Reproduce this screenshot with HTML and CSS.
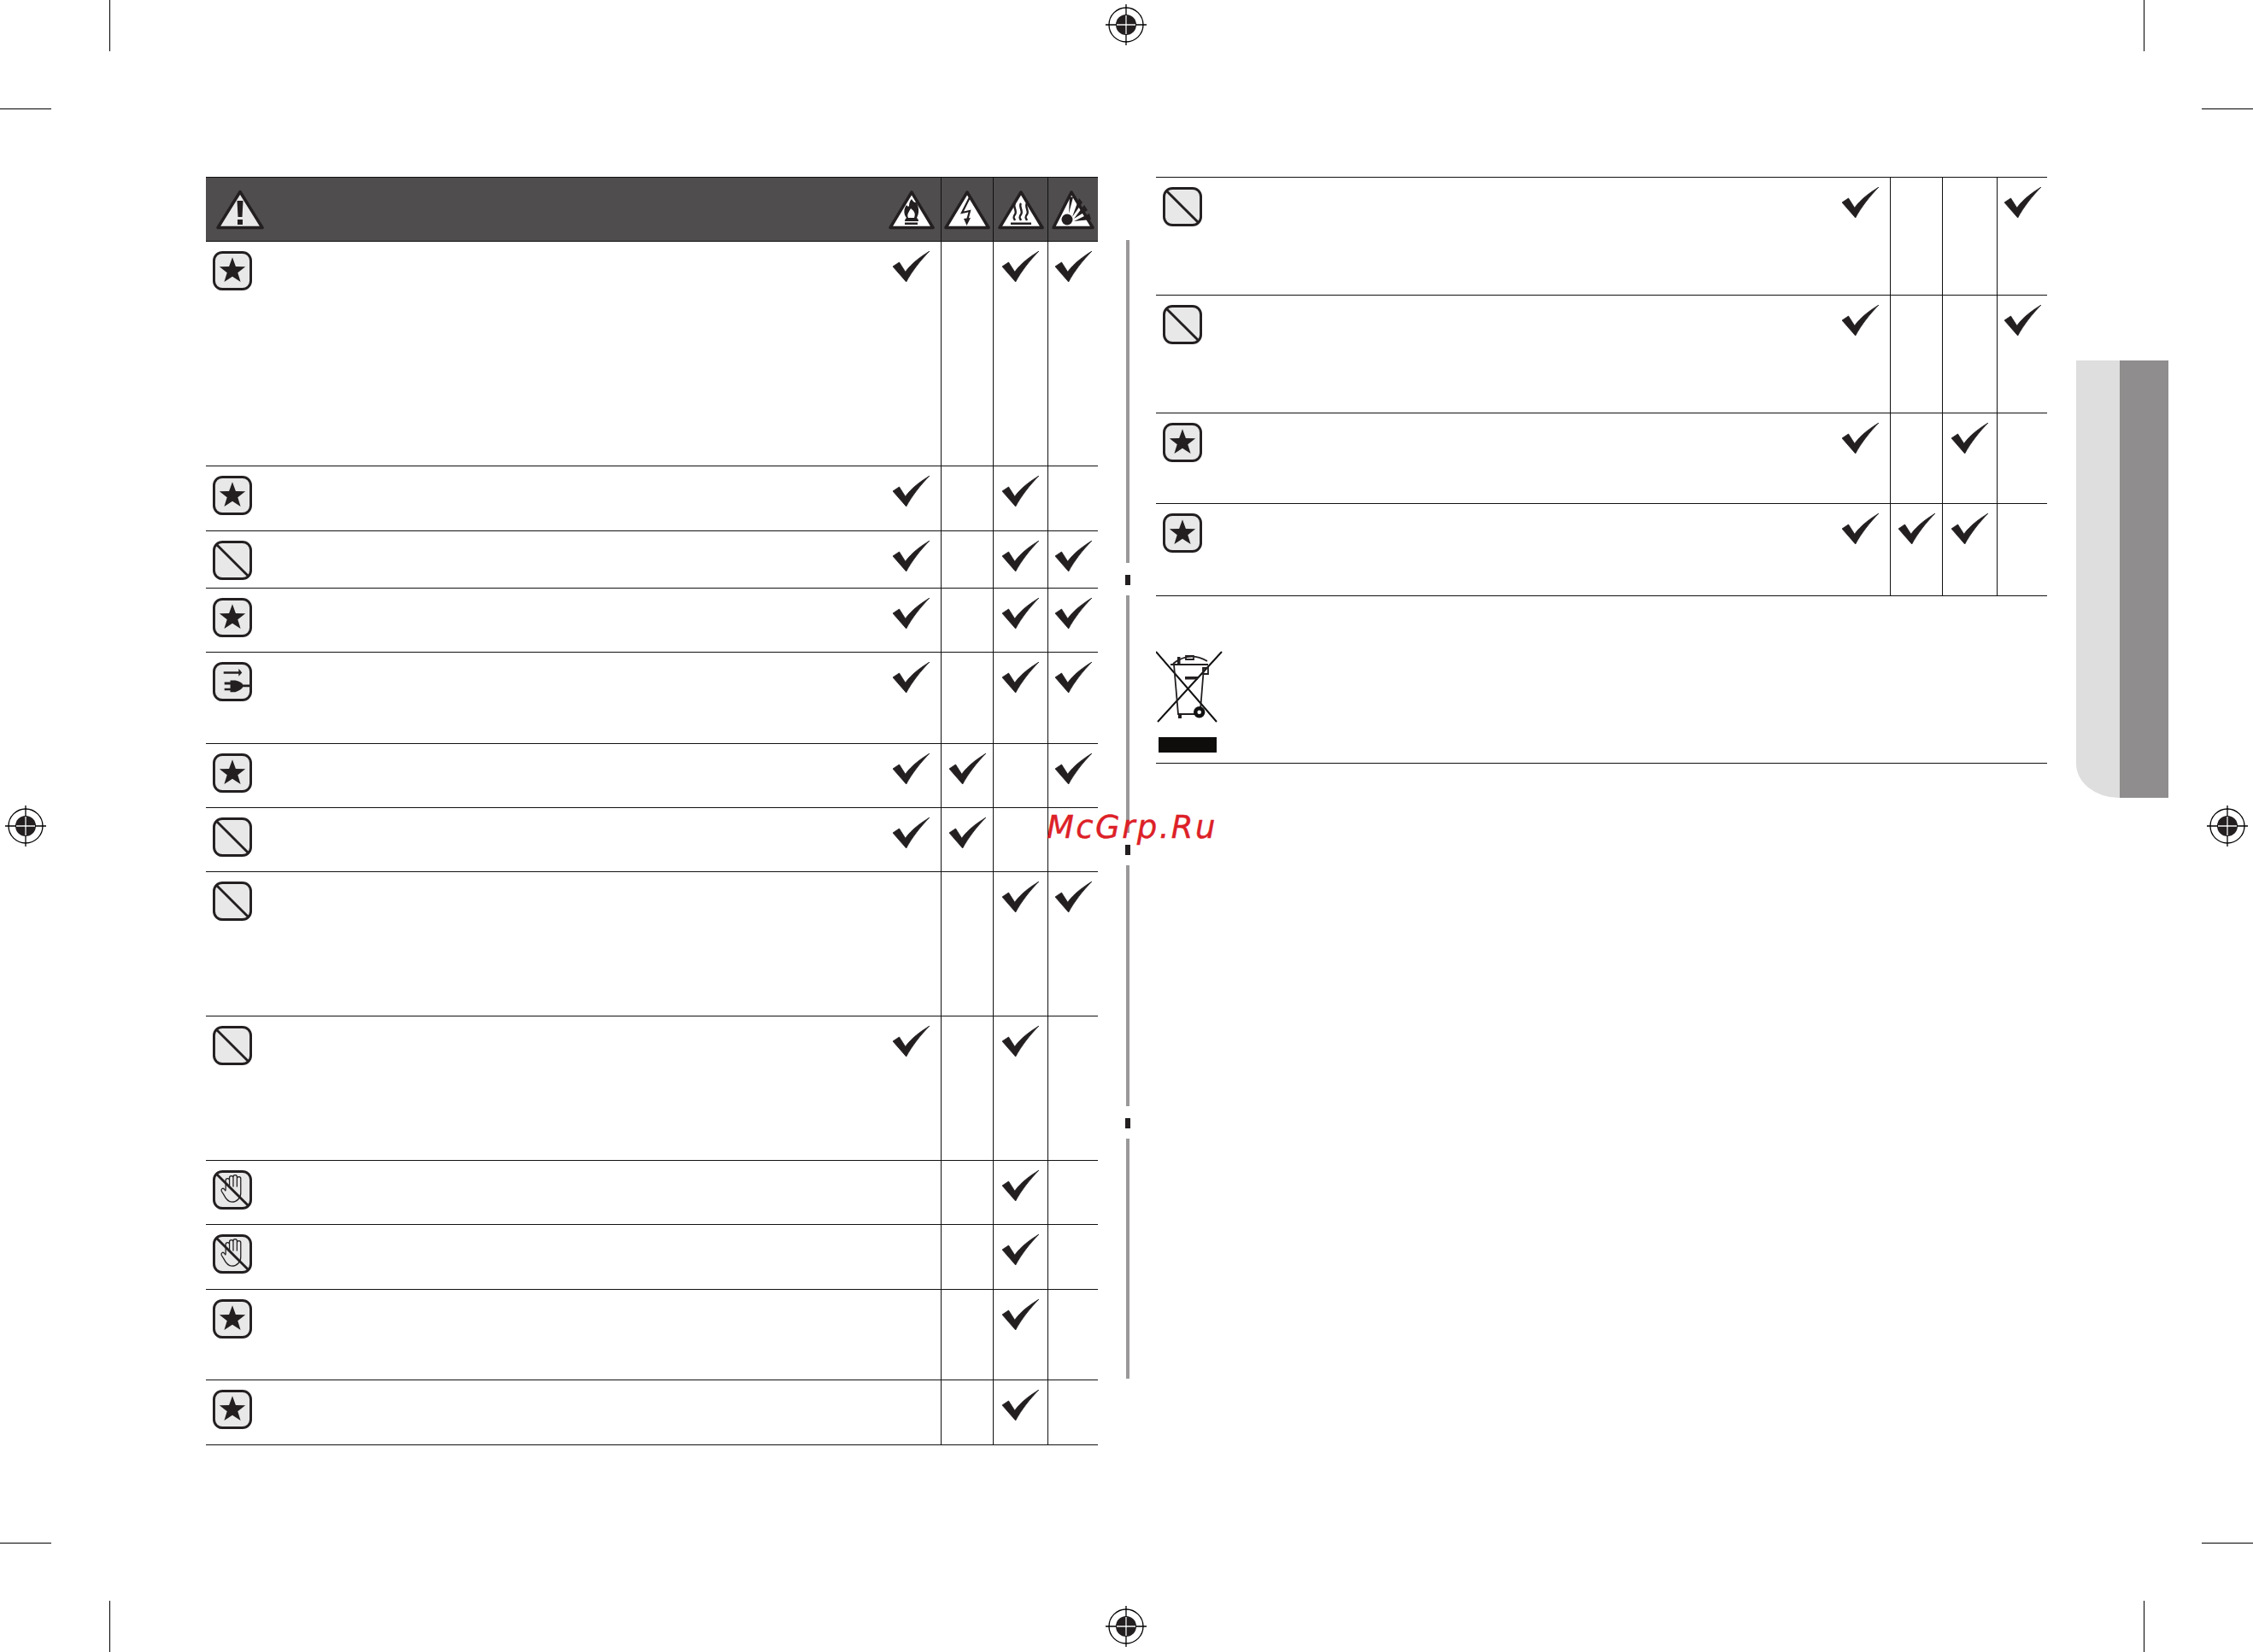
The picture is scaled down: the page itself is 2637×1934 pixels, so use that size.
FILE: index.html
```html
<!DOCTYPE html>
<html lang="en">
<head>
<meta charset="utf-8">
<title>Safety symbols</title>
<link rel="stylesheet" href="styles.css">
</head>
<body>
<svg class="defs" width="0" height="0" aria-hidden="true">
  <symbol id="check" viewBox="0 0 43 36"><path class="chk-path" d="M0 18 L7.5 13 L14.7 24.3 C22 14 32 7 43 0 C33 10 22 24 15.7 36 Z"/></symbol>
  <symbol id="star" viewBox="0 0 47 47"><rect x="1.500" y="1.500" width="44" height="44" rx="10" class="box"/><path d="M23.500 7.500 27.500 18.500 39 18.700 29.900 25.700 33.300 36.900 23.500 30.300 13.700 36.900 17.100 25.700 8 18.700 19.500 18.500Z"/></symbol>
  <symbol id="no" viewBox="0 0 47 47"><rect x="1.500" y="1.500" width="44" height="44" rx="10" class="box"/><path d="M4 4 43 43" class="ln"/></symbol>
  <symbol id="hand" viewBox="0 0 47 47"><rect x="1.500" y="1.500" width="44" height="44" rx="10" class="box"/><path class="hand-line" d="M15.500 24V12a2.250 2.250 0 0 1 4.500 0V21M20 21V9a2.250 2.250 0 0 1 4.500 0V20M24.500 20V8a2.250 2.250 0 0 1 4.500 0V20M29 20V10a2.250 2.250 0 0 1 4.500 0V27C33.500 33 29 38 23 38C18 38 15 33 13 29L10.500 25C9.500 22 12.500 20.500 14 23L15.500 25"/><path d="M4 4 43 43" class="ln"/></symbol>
  <symbol id="plug" viewBox="0 0 47 47"><rect x="1.500" y="1.500" width="44" height="44" rx="10" class="box"/><path d="M13 11.500H31V8L35 12.700 31 17V14H13Z"/><path d="M14 24H21V22H27Q35 24 36 27H44V30H36Q35 33 27 36H21V34H14V31.500H21V27H14Z"/></symbol>
  <symbol id="warn" viewBox="0 0 56 47"><path class="tri-grey" d="M28 2.500 54 44.500H2Z"/><path d="M24.500 13H31.500L30.500 32H25.500ZM25 35H31V41H25Z"/></symbol>
  <symbol id="fire" viewBox="0 0 54 47"><path class="tri" d="M27 3 52 44.500H2Z"/><path d="M27 11C29 15 32 16 32 14 36 20 36 28 33 33 35 35 35 36 35 37H19C19 36 19 35 21 33 17 28 18 22 21 18 22 20 24 20 24 19 24 16 25 13 27 11Z"/><path class="cut" d="M26 22C30 25 32 28 30 33H23C21 29 24 26 26 22Z"/><path d="M19 38.500H34V41H19Z"/></symbol>
  <symbol id="bolt" viewBox="0 0 54 47"><path class="tri" d="M27 3 52 44.500H2Z"/><path class="bolt-line" d="M30 9 21 27 30 25 27 36"/><path d="M23 34 31 33 26.500 42Z"/></symbol>
  <symbol id="hot" viewBox="0 0 54 47"><path class="tri" d="M27 3 52 44.500H2Z"/><path class="wave" d="M20 16C17 20 23 25 20 29S19 33 20 36M27 16C24 20 30 25 27 29S26 33 27 36M34 16C31 20 37 25 34 29S33 33 34 36"/><path d="M15 38.500H39V41H15Z"/></symbol>
  <symbol id="blast" viewBox="0 0 50 47"><path class="tri" d="M23 3 48 44.500H2Z"/><circle cx="18" cy="35" r="6.500"/><path d="M24 32 36 15 32 10ZM26 34 42 24 38 18ZM26 37 46 35 44 28ZM20 28 25 9 21 8Z"/></symbol>
  <symbol id="reg" viewBox="0 0 48 48"><circle cx="24" cy="24" r="20" class="ring"/><circle cx="24" cy="24" r="12"/><path class="cross" d="M0 24H48M24 0V48"/><path class="cross-in" d="M13 24H35M24 13V35"/></symbol>
  <symbol id="bin" viewBox="0 0 78 84"><path class="cross2" d="M0 1 71 83M77 1 2 83"/><path class="thin" d="M21 16 26 74H45M56 19 52 69M17 16H61M20 15Q39 0 60 12M35 6H44V10H35ZM55 20H61V27H55Z"/><path d="M25 7H28.500V16H25ZM34 30H49V33.500H34ZM26 74H30V79H26Z"/><circle cx="50.700" cy="71.700" r="4.500" class="wheel"/></symbol>
</svg>

<div class="mark reg reg-top"><svg><use href="#reg"/></svg></div>
<div class="mark reg reg-bottom"><svg><use href="#reg"/></svg></div>
<div class="mark reg reg-left"><svg><use href="#reg"/></svg></div>
<div class="mark reg reg-right"><svg><use href="#reg"/></svg></div>
<div class="mark v tl-v"></div><div class="mark h tl-h"></div>
<div class="mark v tr-v"></div><div class="mark h tr-h"></div>
<div class="mark v bl-v"></div><div class="mark h bl-h"></div>
<div class="mark v br-v"></div><div class="mark h br-h"></div>

<main class="page">
  <section class="sheet">
    <div class="row head">
      <div class="sym"><svg class="warn"><use href="#warn"/></svg></div>
      <div class="cell col-a"><svg class="hz"><use href="#fire"/></svg></div>
      <div class="cell"><svg class="hz"><use href="#bolt"/></svg></div>
      <div class="cell"><svg class="hz"><use href="#hot"/></svg></div>
      <div class="cell"><svg class="hz hz-b"><use href="#blast"/></svg></div>
    </div>
    <div class="row h-263"><div class="sym"><svg class="ico"><use href="#star"/></svg></div><div class="cell col-a"><svg class="chk"><use href="#check"/></svg></div><div class="cell"></div><div class="cell"><svg class="chk"><use href="#check"/></svg></div><div class="cell"><svg class="chk"><use href="#check"/></svg></div></div>
    <div class="row h-76"><div class="sym"><svg class="ico"><use href="#star"/></svg></div><div class="cell col-a"><svg class="chk"><use href="#check"/></svg></div><div class="cell"></div><div class="cell"><svg class="chk"><use href="#check"/></svg></div><div class="cell"></div></div>
    <div class="row h-67"><div class="sym"><svg class="ico"><use href="#no"/></svg></div><div class="cell col-a"><svg class="chk"><use href="#check"/></svg></div><div class="cell"></div><div class="cell"><svg class="chk"><use href="#check"/></svg></div><div class="cell"><svg class="chk"><use href="#check"/></svg></div></div>
    <div class="row h-75"><div class="sym"><svg class="ico"><use href="#star"/></svg></div><div class="cell col-a"><svg class="chk"><use href="#check"/></svg></div><div class="cell"></div><div class="cell"><svg class="chk"><use href="#check"/></svg></div><div class="cell"><svg class="chk"><use href="#check"/></svg></div></div>
    <div class="row h-107"><div class="sym"><svg class="ico"><use href="#plug"/></svg></div><div class="cell col-a"><svg class="chk"><use href="#check"/></svg></div><div class="cell"></div><div class="cell"><svg class="chk"><use href="#check"/></svg></div><div class="cell"><svg class="chk"><use href="#check"/></svg></div></div>
    <div class="row h-75"><div class="sym"><svg class="ico"><use href="#star"/></svg></div><div class="cell col-a"><svg class="chk"><use href="#check"/></svg></div><div class="cell"><svg class="chk"><use href="#check"/></svg></div><div class="cell"></div><div class="cell"><svg class="chk"><use href="#check"/></svg></div></div>
    <div class="row h-75"><div class="sym"><svg class="ico"><use href="#no"/></svg></div><div class="cell col-a"><svg class="chk"><use href="#check"/></svg></div><div class="cell"><svg class="chk"><use href="#check"/></svg></div><div class="cell"></div><div class="cell"></div></div>
    <div class="row h-169"><div class="sym"><svg class="ico"><use href="#no"/></svg></div><div class="cell col-a"></div><div class="cell"></div><div class="cell"><svg class="chk"><use href="#check"/></svg></div><div class="cell"><svg class="chk"><use href="#check"/></svg></div></div>
    <div class="row h-169"><div class="sym"><svg class="ico"><use href="#no"/></svg></div><div class="cell col-a"><svg class="chk"><use href="#check"/></svg></div><div class="cell"></div><div class="cell"><svg class="chk"><use href="#check"/></svg></div><div class="cell"></div></div>
    <div class="row h-75"><div class="sym"><svg class="ico"><use href="#hand"/></svg></div><div class="cell col-a"></div><div class="cell"></div><div class="cell"><svg class="chk"><use href="#check"/></svg></div><div class="cell"></div></div>
    <div class="row h-76"><div class="sym"><svg class="ico"><use href="#hand"/></svg></div><div class="cell col-a"></div><div class="cell"></div><div class="cell"><svg class="chk"><use href="#check"/></svg></div><div class="cell"></div></div>
    <div class="row h-106"><div class="sym"><svg class="ico"><use href="#star"/></svg></div><div class="cell col-a"></div><div class="cell"></div><div class="cell"><svg class="chk"><use href="#check"/></svg></div><div class="cell"></div></div>
    <div class="row h-76"><div class="sym"><svg class="ico"><use href="#star"/></svg></div><div class="cell col-a"></div><div class="cell"></div><div class="cell"><svg class="chk"><use href="#check"/></svg></div><div class="cell"></div></div>
  </section>

  <div class="spine">
    <div class="bar bar-a"></div><div class="tick"></div>
    <div class="bar bar-b"></div><div class="tick"></div>
    <div class="bar bar-c"></div><div class="tick"></div>
    <div class="bar bar-d"></div>
  </div>

  <section class="sheet sheet-right">
    <div class="row h-138"><div class="sym"><svg class="ico"><use href="#no"/></svg></div><div class="cell col-a"><svg class="chk"><use href="#check"/></svg></div><div class="cell"></div><div class="cell"></div><div class="cell"><svg class="chk"><use href="#check"/></svg></div></div>
    <div class="row h-138"><div class="sym"><svg class="ico"><use href="#no"/></svg></div><div class="cell col-a"><svg class="chk"><use href="#check"/></svg></div><div class="cell"></div><div class="cell"></div><div class="cell"><svg class="chk"><use href="#check"/></svg></div></div>
    <div class="row h-106"><div class="sym"><svg class="ico"><use href="#star"/></svg></div><div class="cell col-a"><svg class="chk"><use href="#check"/></svg></div><div class="cell"></div><div class="cell"><svg class="chk"><use href="#check"/></svg></div><div class="cell"></div></div>
    <div class="row h-108"><div class="sym"><svg class="ico"><use href="#star"/></svg></div><div class="cell col-a"><svg class="chk"><use href="#check"/></svg></div><div class="cell"><svg class="chk"><use href="#check"/></svg></div><div class="cell"><svg class="chk"><use href="#check"/></svg></div><div class="cell"></div></div>
    <div class="disposal">
      <svg class="bin"><use href="#bin"/></svg>
      <div class="bin-bar"></div>
    </div>
  </section>

  <aside class="tab"><div class="tab-light"></div><div class="tab-dark"></div></aside>
</main>

<div class="watermark">McGrp.Ru</div>
</body>
</html>
```
FILE: styles.css
```css
* { box-sizing: border-box; }
html, body { margin: 0; padding: 0; background: #fff; }
body { position: relative; width: 2637px; height: 1934px; overflow: hidden; font-family: "DejaVu Sans", sans-serif; }
.defs { position: absolute; }

.page { display: flex; align-items: flex-start; padding: 207px 0 0 241px; }

.sheet { width: 1044px; flex: none; }
.sheet-right { width: 1043px; border-top: 1px solid #111; }

.row { display: grid; grid-template-columns: 1fr 69px 61px 64px 59px; border-bottom: 1px solid #111; }
.head { height: 76px; background: #4f4d4e; border-top: 1px solid #111; }
.h-67 { height: 67px; }
.h-75 { height: 75px; }
.h-76 { height: 76px; }
.h-106 { height: 106px; }
.h-107 { height: 107px; }
.h-108 { height: 108px; }
.h-138 { height: 138px; }
.h-169 { height: 169px; }
.h-263 { height: 263px; }

.sym { padding: 11px 0 0 8px; }
.cell { display: flex; justify-content: center; border-left: 1px solid #111; padding-top: 11px; }
.cell.col-a { border-left: 0; }

.head .sym { padding: 14px 0 0 12px; }
.head .cell { padding-top: 14px; }

.ico { display: block; width: 46px; height: 46px; }
.chk { display: block; width: 43px; height: 36px; }
.warn { display: block; width: 56px; height: 47px; }
.hz { display: block; width: 54px; height: 47px; }
.hz-b { width: 50px; }

svg { fill: #231f20; }
.chk-path { stroke: #231f20; stroke-width: 0.8; }
.box { fill: #e8e8e8; stroke: #231f20; stroke-width: 3; }
.ln { fill: none; stroke: #231f20; stroke-width: 3; }
.thin { fill: none; stroke: #231f20; stroke-width: 1.8; }
.hand-line { fill: none; stroke: #231f20; stroke-width: 1.3; }
.bolt-line { fill: none; stroke: #231f20; stroke-width: 2.2; }
.wave { fill: none; stroke: #231f20; stroke-width: 2.4; }
.tri { fill: #fff; stroke: #231f20; stroke-width: 3.5; stroke-linejoin: round; }
.tri-grey { fill: #e8e8e8; stroke: #231f20; stroke-width: 3.5; stroke-linejoin: round; }
.cut { fill: #fff; }
.ring { fill: none; stroke: #000; stroke-width: 1.3; }
.cross { fill: none; stroke: #000; stroke-width: 1.3; }
.cross-in { fill: none; stroke: #fff; stroke-width: 1.3; }
.cross2 { fill: none; stroke: #111; stroke-width: 2; }
.wheel { fill: #fff; stroke: #111; stroke-width: 4.4; }

.spine { flex: none; width: 6px; margin: 74px 30px 0 32px; display: flex; flex-direction: column; align-items: center; }
.bar { width: 4px; background: #9a9898; }
.tick { width: 6px; height: 12px; margin: 14px 0 12px; background: #231f20; }
.bar-a { height: 378px; }
.bar-b { height: 278px; }
.bar-c { height: 282px; }
.bar-d { height: 281px; }

.disposal { height: 196px; border-bottom: 1px solid #111; padding-top: 64px; }
.bin { display: block; width: 78px; height: 84px; }
.bin-bar { width: 68px; height: 18px; margin: 17px 0 0 3px; background: #0e0d0c; }

.tab { flex: none; display: flex; width: 108px; height: 512px; margin: 215px 0 0 34px; }
.tab-light { width: 51px; background: #dedede; border-bottom-left-radius: 50px 40px; }
.tab-dark { width: 57px; background: #8f8d8d; }

.mark { position: absolute; }
.reg svg { display: block; width: 48px; height: 48px; }
.reg-top { left: 1294px; top: 5px; }
.reg-bottom { left: 1294px; top: 1880px; }
.reg-left { left: 6px; top: 943px; }
.reg-right { left: 2583px; top: 943px; }

.v { width: 1px; height: 60px; background: #000; }
.h { width: 60px; height: 1px; background: #000; }
.tl-v { left: 128px; top: 0; }
.tl-h { left: 0; top: 127px; }
.tr-v { left: 2509px; top: 0; }
.tr-h { left: 2577px; top: 127px; }
.bl-v { left: 128px; top: 1874px; }
.bl-h { left: 0; top: 1806px; }
.br-v { left: 2509px; top: 1874px; }
.br-h { left: 2577px; top: 1806px; }

.watermark { position: absolute; left: 1225px; top: 947px; font: oblique 37px/1.2 "DejaVu Sans", sans-serif; letter-spacing: 2.4px; color: #dd2027; -webkit-text-stroke: 0.4px #dd2027; }
```
